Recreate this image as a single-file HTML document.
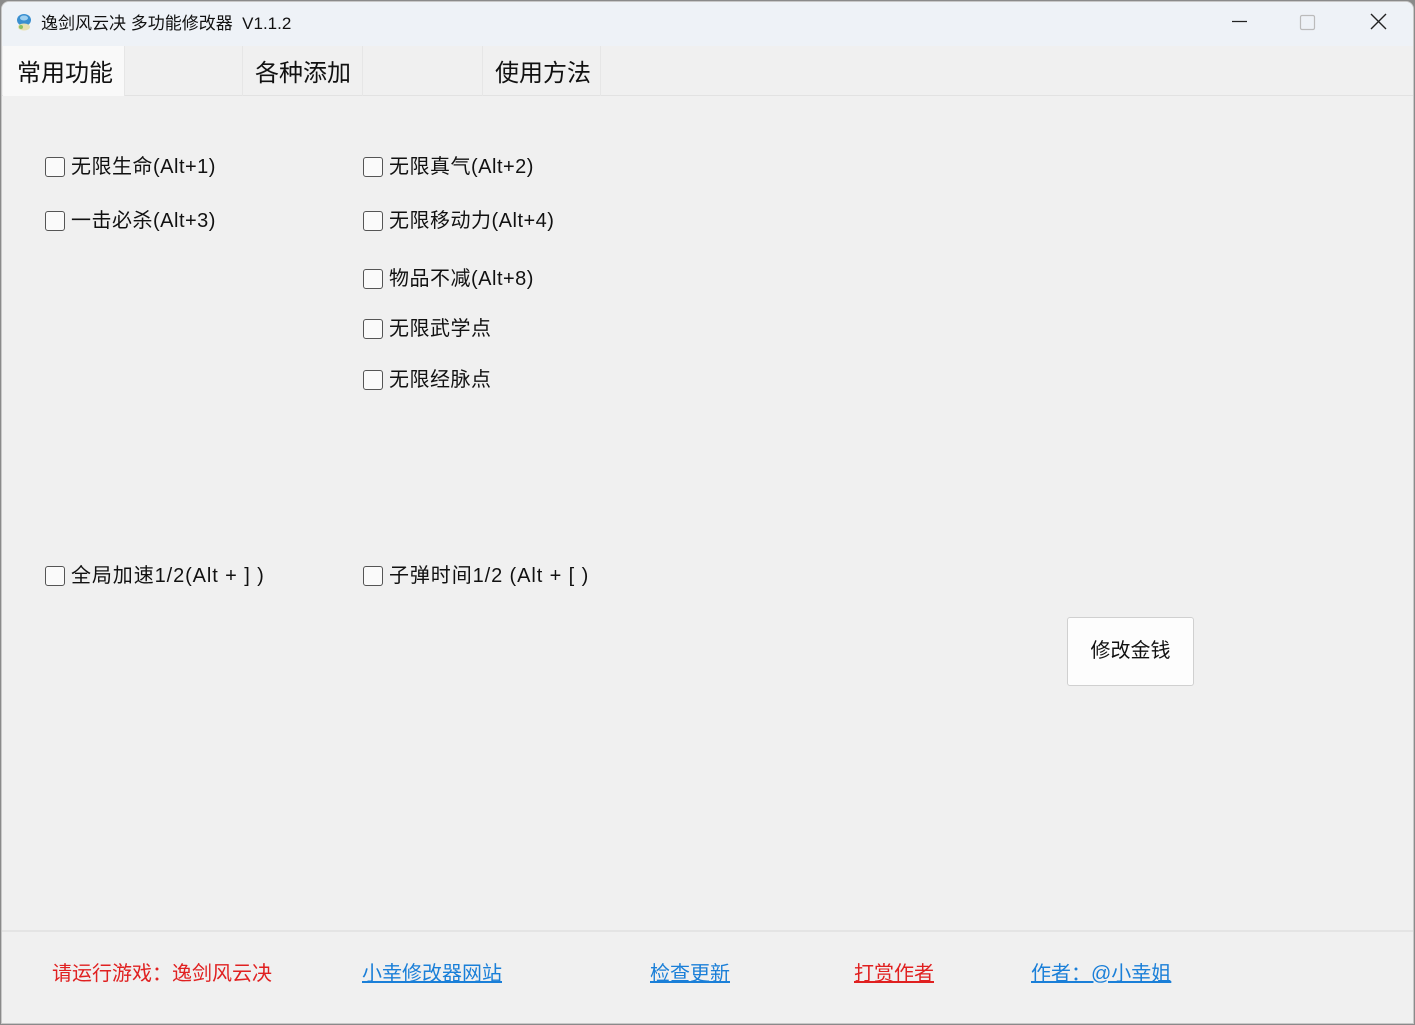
<!DOCTYPE html>
<html><head><meta charset="utf-8"><style>
*{margin:0;padding:0;box-sizing:border-box}
body{width:1415px;height:1025px;background:#8a8a8a;font-family:"Liberation Sans","Microsoft YaHei","Noto Sans CJK SC",sans-serif;overflow:hidden;position:relative}
.win{position:absolute;left:1px;top:1px;width:1413px;height:1023px;background:#f0f0f0;border:1px solid #c8c8c8;border-radius:8px 8px 0 0;overflow:hidden}
.title{position:absolute;left:0;top:0;width:100%;height:44px;background:#eef2f7}
.title .t{position:absolute;left:39px;top:7px;font-size:17px;color:#111}
.icon{position:absolute;left:13px;top:11px;width:18px;height:18px}
.ctl{position:absolute;top:-2px;height:44px}
.tabs{position:absolute;left:0;top:44px;width:100%;height:50px;background:#f0f0f0;border-bottom:1px solid #e2e2e2}
.tab{position:absolute;top:0;height:50px;font-size:24px;color:#111;padding-top:7px;border-right:1px solid #e6e6e6}
.sel{background:#f9f9f9}
.cb{position:absolute;font-size:20px;color:#111;white-space:nowrap;line-height:24px;letter-spacing:0.5px}
.cb::before{content:"";position:absolute;left:-26px;top:2px;width:18px;height:18px;border:1px solid #555;border-radius:3px;background:#fafafa}
.btn{position:absolute;left:1065px;top:615px;width:127px;height:69px;background:#fdfdfd;border:1px solid #d0d0d0;border-radius:3px;font-size:20px;text-align:center;line-height:67px;color:#111}
.line{position:absolute;left:0;top:928px;width:100%;height:2px;background:#e4e4e4}
.f{position:absolute;top:960px;font-size:20px;line-height:24px;white-space:nowrap}
.r{color:#e02020}.b{color:#1a7fd8}.u{text-decoration:underline}
</style></head><body>
<div class="win">
<div class="title">
<svg class="icon" viewBox="0 0 18 18"><ellipse cx="9" cy="7" rx="7" ry="6" fill="#3a8fd0"/><ellipse cx="9" cy="5" rx="4" ry="2.5" fill="#9fd0f0"/><ellipse cx="9" cy="14" rx="6" ry="3.5" fill="#e8e0b0"/><circle cx="6" cy="14" r="2" fill="#8cc060"/></svg>
<div class="t">逸剑风云决 多功能修改器&nbsp; V1.1.2</div>
<svg class="ctl" style="left:1219px" width="40" height="44"><line x1="11" y1="21.5" x2="26" y2="21.5" stroke="#222" stroke-width="1.2"/></svg>
<svg class="ctl" style="left:1289px" width="40" height="44"><rect x="9.5" y="15.5" width="14" height="14" rx="1.5" fill="none" stroke="#bbb" stroke-width="1.2"/></svg>
<svg class="ctl" style="left:1359px" width="40" height="44"><path d="M10 14 L25 29 M25 14 L10 29" stroke="#222" stroke-width="1.4"/></svg>
</div>
<div class="tabs">
<div class="tab sel" style="left:1px;width:122px;padding-left:14px">常用功能</div>
<div class="tab" style="left:123px;width:118px"></div>
<div class="tab" style="left:241px;width:120px;padding-left:12px">各种添加</div>
<div class="tab" style="left:361px;width:120px"></div>
<div class="tab" style="left:481px;width:118px;padding-left:12px">使用方法</div>
</div>
<div class="cb" style="left:69px;top:153px">无限生命(Alt+1)</div>
<div class="cb" style="left:387px;top:153px">无限真气(Alt+2)</div>
<div class="cb" style="left:69px;top:207px">一击必杀(Alt+3)</div>
<div class="cb" style="left:387px;top:207px">无限移动力(Alt+4)</div>
<div class="cb" style="left:387px;top:265px">物品不减(Alt+8)</div>
<div class="cb" style="left:387px;top:315px">无限武学点</div>
<div class="cb" style="left:387px;top:366px">无限经脉点</div>
<div class="cb" style="left:69px;top:562px;letter-spacing:0.9px">全局加速1/2(Alt + ] )</div>
<div class="cb" style="left:387px;top:562px;letter-spacing:0.9px">子弹时间1/2 (Alt + [ )</div>
<div class="btn">修改金钱</div>
<div class="line"></div>
<div class="f r" style="left:50px">请运行游戏：逸剑风云决</div>
<div class="f b u" style="left:360px">小幸修改器网站</div>
<div class="f b u" style="left:648px">检查更新</div>
<div class="f r u" style="left:852px">打赏作者</div>
<div class="f b u" style="left:1029px">作者：@小幸姐</div>
</div>
</body></html>
